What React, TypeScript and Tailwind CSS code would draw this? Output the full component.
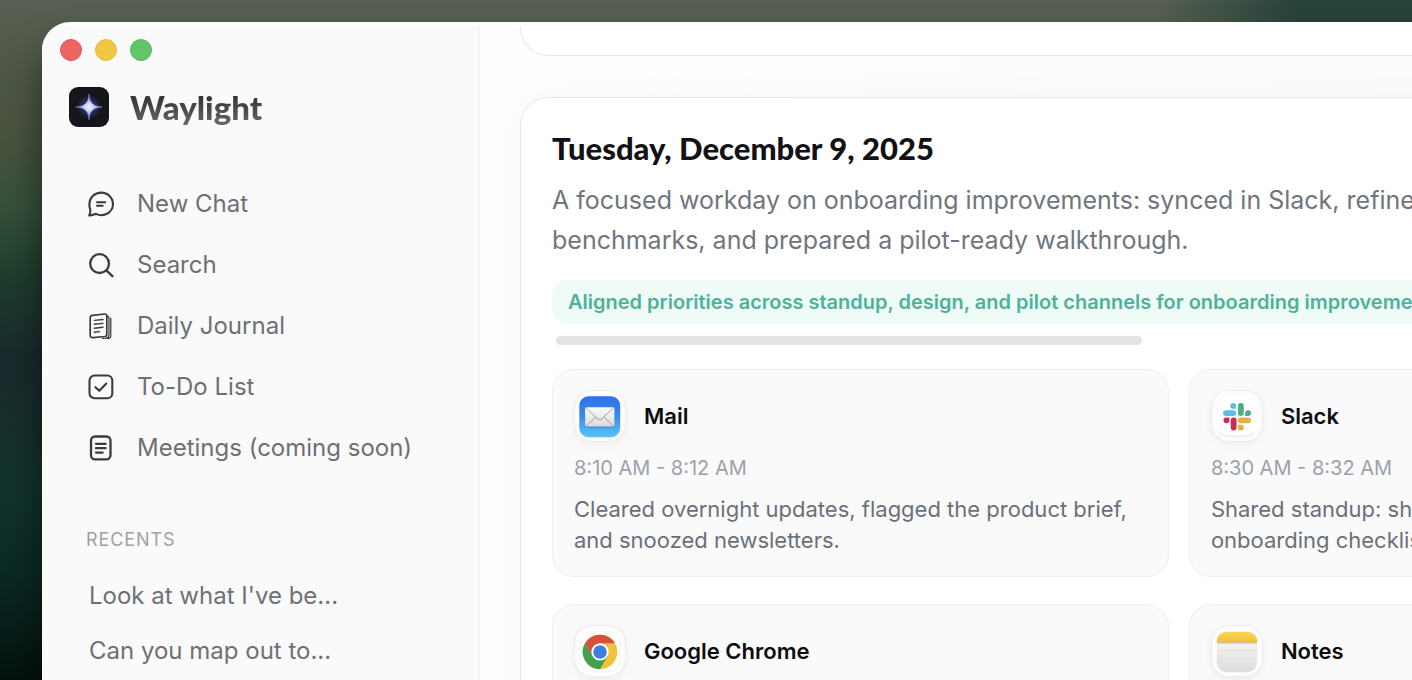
import React from 'react'

type IconProps = { className?: string }

const Sparkle: React.FC = () => (
  <svg viewBox="0 0 40 40" className="size-10" aria-hidden="true">
    <defs>
      <radialGradient id="spark">
        <stop offset="0" stopColor="#f4f5ff" />
        <stop offset="0.4" stopColor="#c3cafc" />
        <stop offset="1" stopColor="#5055c4" />
      </radialGradient>
      <radialGradient id="halo">
        <stop offset="0" stopColor="#5b63c8" stopOpacity="0.7" />
        <stop offset="1" stopColor="#5b63c8" stopOpacity="0" />
      </radialGradient>
    </defs>
    <rect width="40" height="40" rx="9" fill="#15161b" />
    <circle cx="20" cy="20" r="12" fill="url(#halo)" />
    <path
      d="M20 7C20.6 15 22.500 18.900 33 20C22.500 21.100 20.600 25 20 33C19.400 25 17.500 21.100 7 20C17.500 18.900 19.400 15 20 7Z"
      fill="url(#spark)"
      stroke="#8f97ee"
      strokeOpacity="0.5"
      strokeWidth="1"
    />
  </svg>
)

const stroke = {
  viewBox: '0 0 26 26',
  fill: 'none',
  stroke: 'currentColor',
  strokeWidth: 2.1,
  strokeLinecap: 'round',
  strokeLinejoin: 'round',
} as const

const ChatIcon: React.FC<IconProps> = ({ className }) => (
  <svg {...stroke} className={className} aria-hidden="true">
    <path d="M1.200 24.400C2.200 22.500 2.500 20.800 2.200 18.500C1.600 17 1.300 15 1.400 13C1.600 6.500 6.700 1.600 13.200 1.600C19.900 1.600 25 6.700 25 13C25 19.400 19.900 24.200 13.200 24.200C11.200 24.200 9.500 23.700 8 22.900C6 23.200 4 24.800 1.200 24.400Z" />
    <path d="M9 11.200H17.200M9 14.800H14.600" />
  </svg>
)

const SearchIcon: React.FC<IconProps> = ({ className }) => (
  <svg {...stroke} strokeWidth={2.300} className={className} aria-hidden="true">
    <circle cx="11.600" cy="11.600" r="9.400" />
    <path d="M18.600 18.600L24.400 24.200" />
  </svg>
)

const JournalIcon: React.FC<IconProps> = ({ className }) => (
  <svg {...stroke} strokeWidth={1.700} className={className} aria-hidden="true">
    <path d="M4.500 2.300L16.500 1C18 0.900 18.800 1.700 18.800 3V21.200C18.800 22.600 18.200 23.300 16.800 23.500L5 24.600C3.200 24.700 2.200 23.900 2.200 22.300V4.800C2.200 3.300 3 2.500 4.500 2.300Z" />
    <path
      d="M19.200 3.200C20.600 3.400 21 4 21 5.300V22C21 24 20.200 25 18 25.200L14.500 25.400M22.800 5V23C22.800 25 21.600 25.600 19.500 25.600"
      strokeWidth={1.200}
    />
    <path d="M6.300 7.400L15 6.500M6.300 11.300L15 10.400M6.300 15.200L15 14.300M6.300 19.200L11.600 18.600" strokeWidth={1.400} />
  </svg>
)

const TodoIcon: React.FC<IconProps> = ({ className }) => (
  <svg {...stroke} className={className} aria-hidden="true">
    <rect x="1.500" y="1.500" width="22.800" height="22.800" rx="5" />
    <path d="M7.400 13.200L11.300 16.800L18.300 9.600" />
  </svg>
)

const MeetingIcon: React.FC<IconProps> = ({ className }) => (
  <svg {...stroke} strokeWidth={2.300} className={className} aria-hidden="true">
    <rect x="3" y="1.500" width="19.500" height="22.800" rx="4" />
    <path d="M8 8.800H17.600M8 13.200H17.600M8 17.600H14.600" />
  </svg>
)

const MailIcon: React.FC = () => (
  <svg viewBox="0 0 52 52" className="size-full" aria-hidden="true">
    <defs>
      <linearGradient id="mail-bg" x2="0" y2="1">
        <stop offset="0" stopColor="#2f6fe6" />
        <stop offset="0.5" stopColor="#3a8cee" />
        <stop offset="1" stopColor="#58c6f6" />
      </linearGradient>
      <linearGradient id="mail-paper" x2="0" y2="1">
        <stop offset="0" stopColor="#fbfbfb" />
        <stop offset="1" stopColor="#dcdcdc" />
      </linearGradient>
    </defs>
    <rect x="4.500" y="5.500" width="42.500" height="42.500" rx="9.500" fill="url(#mail-bg)" />
    <rect x="10.500" y="18" width="30.500" height="20" rx="2" fill="#1f5fb5" opacity="0.5" />
    <rect x="10.500" y="17" width="30.500" height="20" rx="2" fill="url(#mail-paper)" />
    <path
      d="M12 18L23 28.500C24.700 30 26.800 30 28.500 28.500L39.500 18M12 36L21.500 27M39.500 36L30 27"
      fill="none"
      stroke="#9a9a9a"
      strokeWidth="1"
    />
  </svg>
)

const SlackIcon: React.FC = () => (
  <svg viewBox="0 0 52 52" className="size-full" aria-hidden="true">
    <rect x="5.500" y="6.500" width="40" height="40" rx="10" fill="#fff" />
    <path d="M7 42C9 45.500 12 47 16 47H35C39 47 42 45.500 44 42" fill="none" stroke="#e0e0e0" />
    <g fill="#5bbde4">
      <rect x="11.500" y="20" width="13.500" height="6" rx="3" />
      <path d="M25 18.500H22A3 3 0 1 1 25 15.500Z" />
    </g>
    <g fill="#4bae80">
      <rect x="27" y="12.500" width="6" height="13.500" rx="3" />
      <path d="M34.500 26V23A3 3 0 1 1 37.500 26Z" />
    </g>
    <g fill="#e2b13f">
      <rect x="27" y="27.500" width="13.500" height="6" rx="3" />
      <path d="M27 35H30A3 3 0 1 1 27 38Z" />
    </g>
    <g fill="#cd2a56">
      <rect x="19.500" y="27.500" width="6" height="13.500" rx="3" />
      <path d="M18 27.500V30.500A3 3 0 1 1 15 27.500Z" />
    </g>
  </svg>
)

const ChromeIcon: React.FC = () => (
  <svg viewBox="0 0 52 52" className="size-full" aria-hidden="true">
    <rect x="5.500" y="6.500" width="41" height="41" rx="10" fill="#fff" stroke="#f1f1f1" />
    <circle cx="26" cy="27" r="18" fill="#f2c13c" />
    <path d="M26 18H41.600A18 18 0 0 0 10.400 18L18.200 31.500Z" fill="#d94f3d" />
    <path d="M10.400 18A18 18 0 0 0 26 45L33.800 31.500L26 27L18.200 31.500Z" fill="#43a04f" />
    <circle cx="26" cy="27" r="9" fill="#fff" />
    <circle cx="26" cy="27" r="7" fill="#3f7de6" />
  </svg>
)

const NotesIcon: React.FC = () => (
  <svg viewBox="0 0 52 52" className="size-full" aria-hidden="true">
    <defs>
      <linearGradient id="note-top" x2="0" y2="1">
        <stop offset="0" stopColor="#f7d85a" />
        <stop offset="1" stopColor="#f3c136" />
      </linearGradient>
      <linearGradient id="note-page" x2="0" y2="1">
        <stop offset="0" stopColor="#fbfbf8" />
        <stop offset="1" stopColor="#dddddb" />
      </linearGradient>
    </defs>
    <rect x="5" y="6" width="42" height="42" rx="10" fill="url(#note-page)" />
    <path d="M5 17V16A10 10 0 0 1 15 6H37A10 10 0 0 1 47 16V17Z" fill="url(#note-top)" />
    <path d="M5 17.500H47" stroke="#b8a98a" />
    <path d="M5 25.500H47M5 33.500H47" stroke="#e0e0de" />
  </svg>
)

const navItems = [
  { label: 'New Chat', Icon: ChatIcon },
  { label: 'Search', Icon: SearchIcon },
  { label: 'Daily Journal', Icon: JournalIcon },
  { label: 'To-Do List', Icon: TodoIcon },
  { label: 'Meetings (coming soon)', Icon: MeetingIcon },
]

const recents = ["Look at what I've be...", 'Can you map out to...']

const activities = [
  {
    app: 'Mail',
    Icon: MailIcon,
    time: '8:10 AM - 8:12 AM',
    text: 'Cleared overnight updates, flagged the product brief, and snoozed newsletters.',
  },
  {
    app: 'Slack',
    Icon: SlackIcon,
    time: '8:30 AM - 8:32 AM',
    text: 'Shared standup: shipping the invite flow, updating the onboarding checklist.',
  },
  {
    app: 'Google Chrome',
    Icon: ChromeIcon,
    time: '8:40 AM - 8:55 AM',
    text: 'Compared onboarding benchmarks.',
  },
  {
    app: 'Notes',
    Icon: NotesIcon,
    time: '9:00 AM - 9:10 AM',
    text: 'Outlined the pilot walkthrough.',
  },
]

const Sidebar: React.FC = () => (
  <aside className="w-[438px] shrink-0 border-r border-[#f0f0f1] bg-[#fafafa]">
    <div className="flex gap-[13px] px-[18px] pt-[13px]">
      <button type="button" aria-label="Close" className="size-[22px] rounded-full border border-[#e0544f] bg-[#ec6560]" />
      <button type="button" aria-label="Minimize" className="size-[22px] rounded-full border border-[#e6bb38] bg-[#f0c742]" />
      <button type="button" aria-label="Zoom" className="size-[22px] rounded-full border border-[#4fb858] bg-[#61c667]" />
    </div>

    <div className="flex items-center gap-[21px] px-[27px] pt-[26px]">
      <Sparkle />
      <span className="bg-linear-to-b from-[#232427] to-[#6c6d70] bg-clip-text font-[Lato] text-[33px] leading-10 font-black text-transparent">
        Waylight
      </span>
    </div>

    <nav className="flex flex-col gap-[21px] px-[46px] pt-[57px]">
      {navItems.map(({ label, Icon }) => (
        <a key={label} href="#" className="flex items-center gap-[23px] text-2xl leading-10 text-[#6e6f75]">
          <Icon className="size-[26px] shrink-0 text-[#3b3b3d]" />
          {label}
        </a>
      ))}
    </nav>

    <section className="px-11 pt-[58px]">
      <h2 className="text-lg leading-7 tracking-wider text-[#9ea2a8]">RECENTS</h2>
      <ul className="flex flex-col gap-[15px] px-[3px] pt-[22px]">
        {recents.map((title) => (
          <li key={title}>
            <a href="#" className="block text-2xl leading-10 text-[#6f7074]">
              {title}
            </a>
          </li>
        ))}
      </ul>
    </section>
  </aside>
)

const ActivityCard: React.FC<(typeof activities)[number]> = ({ app, Icon, time, text }) => (
  <article className="rounded-[22px] border border-[#efeff0] bg-[#fafafa] px-[21px] py-5">
    <header className="flex items-center gap-[18px]">
      <div className="size-[52px] overflow-hidden rounded-[18px] border border-[#ececec] bg-[#fdfdfd] shadow-[0_3px_8px_rgba(0,0,0,0.05)]">
        <Icon />
      </div>
      <h3 className="text-[22px] leading-8 font-semibold text-[#0d0d0f]">{app}</h3>
    </header>
    <p className="mt-3 text-xl leading-7 text-[#9ca1aa]">{time}</p>
    <p className="mt-3 text-[22px] leading-[31px] text-[#6a7079]">{text}</p>
  </article>
)

const DayCard: React.FC = () => (
  <section className="rounded-[28px] border border-[#e7e7e8] bg-white px-[31px] pt-[30px] pb-8 shadow-[0_4px_40px_rgba(0,0,0,0.03)]">
    <h1 className="font-[Lato] text-[31px] leading-10 font-black text-[#121214]">
      Tuesday, December 9, 2025
    </h1>
    <p className="mt-3 text-[25px] leading-10 text-[#71757d]">
      A focused workday on onboarding improvements: synced in Slack, refined the brief against current
      <br />
      benchmarks, and prepared a pilot-ready walkthrough.
    </p>

    <div className="mt-5 flex overflow-hidden">
      <span className="shrink-0 rounded-2xl bg-[#effbf7] px-4 py-2 text-xl leading-7 font-semibold text-[#4db299]">
        Aligned priorities across standup, design, and pilot channels for onboarding improvements
      </span>
    </div>
    <div className="mt-3 px-1">
      <div className="h-[9px] w-[47%] rounded-full bg-[#e4e4e5]" />
    </div>

    <div className="mt-6 grid grid-cols-2 gap-x-5 gap-y-[27px]">
      {activities.map((activity) => (
        <ActivityCard key={activity.app} {...activity} />
      ))}
    </div>
  </section>
)

export default function App() {
  return (
    <div className="h-screen overflow-hidden bg-[linear-gradient(90deg,transparent_82%,#27423a_92%),linear-gradient(180deg,#565f51_0%,#49533f_20%,#34503a_31%,#1f3f2e_40%,#1a2a2c_52%,#12332c_72%,#0b2a24_84%,#04120f_100%)] pt-[22px] pl-[42px] font-[Inter,sans-serif]">
      <div className="flex h-full w-[134%] overflow-hidden rounded-tl-[28px] border-t-4 border-white bg-linear-to-r from-white to-[#fafafa] shadow-[0_28px_36px_rgba(0,0,0,0.5)]">
        <Sidebar />
        <main className="min-w-0 flex-1 px-10">
          <div className="h-[30px] rounded-b-[28px] border border-t-0 border-[#e7e7e8] bg-white" />
          <div className="pt-[41px]">
            <DayCard />
          </div>
        </main>
      </div>
    </div>
  )
}
